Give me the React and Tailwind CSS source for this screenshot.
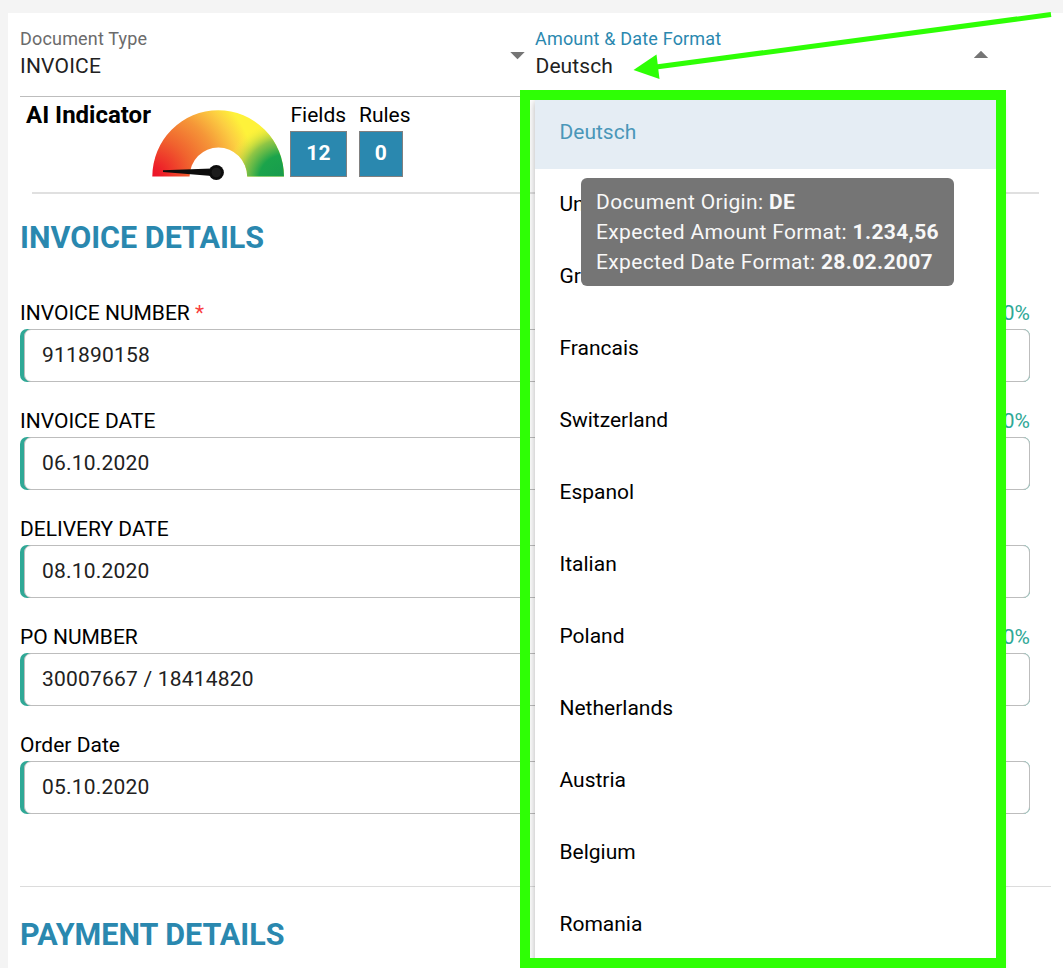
import React from "react";

const fields = [
  { label: "INVOICE NUMBER", value: "911890158", required: true, score: "100%" },
  { label: "INVOICE DATE", value: "06.10.2020", score: "100%" },
  { label: "DELIVERY DATE", value: "08.10.2020" },
  { label: "PO NUMBER", value: "30007667 / 18414820", score: "100%" },
  { label: "Order Date", value: "05.10.2020" },
];

const options = [
  "Deutsch",
  "Un",
  "Gr",
  "Francais",
  "Switzerland",
  "Espanol",
  "Italian",
  "Poland",
  "Netherlands",
  "Austria",
  "Belgium",
  "Romania",
];

function Gauge() {
  return (
    <svg className="mt-[13px] block h-[72px] w-[134px] shrink-0" viewBox="151 110 134 72">
      <defs>
        <radialGradient id="warm" gradientUnits="userSpaceOnUse" cx="152" cy="177" r="106">
          <stop offset="0" stopColor="#ec1029" />
          <stop offset="0.1" stopColor="#ed1f28" />
          <stop offset="0.37" stopColor="#f0622e" />
          <stop offset="0.63" stopColor="#f59638" />
          <stop offset="0.84" stopColor="#fcce42" />
          <stop offset="0.98" stopColor="#fef23a" />
        </radialGradient>
        <radialGradient id="cool" gradientUnits="userSpaceOnUse" cx="284" cy="180" r="60">
          <stop offset="0" stopColor="#179a4e" />
          <stop offset="0.42" stopColor="#1ba44b" />
          <stop offset="0.68" stopColor="#84c146" stopOpacity="0.9" />
          <stop offset="1" stopColor="#fef23a" stopOpacity="0" />
        </radialGradient>
      </defs>
      <path d="M152.3 176.6A65.8 66.3 0 0 1 284 176.6H247.2A28.8 29 0 0 0 189.6 176.6Z" fill="url(#warm)" />
      <path d="M152.3 176.6A65.8 66.3 0 0 1 284 176.6H247.2A28.8 29 0 0 0 189.6 176.6Z" fill="url(#cool)" />
      <path d="M163 170.3L212 168.6V176L163 171.9Z" fill="#0c0c0c" />
      <circle cx="216.3" cy="172.5" r="7.6" fill="#0c0c0c" />
      <circle cx="216.3" cy="172.5" r="4.8" fill="#1c1c1c" />
    </svg>
  );
}

function Counter({ label, value, box, inset = "" }) {
  return (
    <div className="flex flex-col">
      <span className={"h-[26px] whitespace-nowrap text-[21px] leading-5 text-black " + inset}>{label}</span>
      <span className={"flex h-[46px] items-center justify-center border border-[#808080] bg-[#2a88af] pb-px text-[21px] font-bold leading-none tracking-[0.3px] text-white " + box}>
        {value}
      </span>
    </div>
  );
}

function Field({ label, value, required, score }) {
  return (
    <div className="flex h-[108px] flex-col">
      <div className="flex h-[29px] items-center justify-between pb-[3px] text-[21px] leading-[26px]">
        <span className="text-black">
          {label}
          {required && <span className="text-[#f93e3e]"> *</span>}
        </span>
        {score && <span className="text-[#2fa896]">{score}</span>}
      </div>
      <div className="flex h-[53px] rounded-[7px] bg-[#2fa896] pl-1">
        <div className="flex flex-1 items-center rounded-[7px] border border-[#bdbdbd] bg-white pl-[17px] text-[21px] tracking-[0.2px] text-[#212121]">
          {value}
        </div>
      </div>
    </div>
  );
}

export default function App() {
  return (
    <div className="relative h-[968px] w-[1063px] overflow-hidden bg-[#f4f4f4] pl-2 pt-[13px] font-['Roboto',sans-serif]">
      <div className="flex h-[955px] flex-col bg-white pl-3 pr-3">
        <div className="flex">
          <div className="flex h-[84px] w-[505px] border-b border-[#bdbdbd] pt-[13px]">
            <div className="flex flex-1 flex-col">
              <span className="text-[18px] leading-[26px] tracking-[0.18px] text-[#6b6b6b]">Document Type</span>
              <span className="text-[21px] leading-7 tracking-[0.2px] text-[#212121]">INVOICE</span>
            </div>
            <svg className="mt-[26px] h-[8px] w-[15px]" viewBox="0 0 15 8">
              <path d="M0.3 0H14.7L7.5 7.2Z" fill="#757575" />
            </svg>
          </div>
          <div className="ml-[10px] flex w-[454px] pt-[13px]">
            <div className="flex flex-1 flex-col">
              <span className="text-[18px] leading-[26px] tracking-[0.18px] text-[#2a88af]">Amount &amp; Date Format</span>
              <span className="pl-[0.5px] text-[21px] leading-7 tracking-[0.1px] text-[#212121]">Deutsch</span>
            </div>
            <svg className="mt-[25px] h-[8px] w-[15px]" viewBox="0 0 15 8">
              <path d="M-0.2 7H14.2L7 -0.2Z" fill="#757575" />
            </svg>
          </div>
        </div>

        <div className="ml-[6px] flex h-[95px]">
          <h2 className="w-[125px] whitespace-nowrap pt-[4px] text-[24px] font-bold leading-7 text-black">AI Indicator</h2>
          <Gauge />
          <div className="ml-[5px] flex gap-3 pt-[8px]">
            <Counter label="Fields" value="12" box="w-[57px]" inset="pl-[0.5px]" />
            <Counter label="Rules" value="0" box="w-[44px]" />
          </div>
        </div>
        <div className="ml-3 mr-3 h-[2px] shrink-0 bg-[#e0e0e0]" />

        <h1 className="h-[106px] shrink-0 whitespace-nowrap pt-[26px] text-[30.5px] font-bold leading-9 text-[#2a88af]">INVOICE DETAILS</h1>
        <div className="flex w-[1010px] flex-col">
          {fields.map((f) => (
            <Field key={f.label} {...f} />
          ))}
        </div>
        <div className="mt-[46px] h-px shrink-0 bg-[#dcdcdc]" />
        <h1 className="shrink-0 whitespace-nowrap pt-[30px] text-[30.5px] font-bold leading-9 text-[#2a88af]">PAYMENT DETAILS</h1>
      </div>

      <div className="absolute left-[535px] top-[97px] h-[871px] w-[466px] bg-white shadow-[0_4px_8px_rgba(0,0,0,0.3)]">
        <ul className="flex flex-col">
          {options.map((o, i) => (
            <li
              key={o}
              className={
                i === 0
                  ? "flex h-[72px] items-center bg-[#e5edf4] pl-[24.5px] text-[21px] text-[#4a97b9]"
                  : "flex h-[72px] items-center pl-[24.5px] text-[21px] text-black"
              }
            >
              {o}
            </li>
          ))}
        </ul>
      </div>

      <div className="absolute left-[581px] top-[178px] h-[108px] w-[373px] whitespace-nowrap rounded-[6px] bg-[#757575] pl-[15px] pt-[9px] text-[21px] leading-[30px] tracking-[0.35px] text-[#f8f8f8]">
        <p>Document Origin: <b>DE</b></p>
        <p>Expected Amount Format: <b>1.234,56</b></p>
        <p>Expected Date Format: <b>28.02.2007</b></p>
      </div>

      <div className="absolute left-[520px] top-[90px] h-[878px] w-[486px] border-[10px] border-[#2eff05]" />
      <svg className="absolute left-[630px] top-[8px] h-[74px] w-[424px]" viewBox="630 8 424 74">
        <path d="M656 67L1051 14.5" stroke="#2eff05" strokeWidth="5" fill="none" />
        <path d="M633.5 70L656.5 54.5L659.5 79Z" fill="#2eff05" />
      </svg>
    </div>
  );
}
